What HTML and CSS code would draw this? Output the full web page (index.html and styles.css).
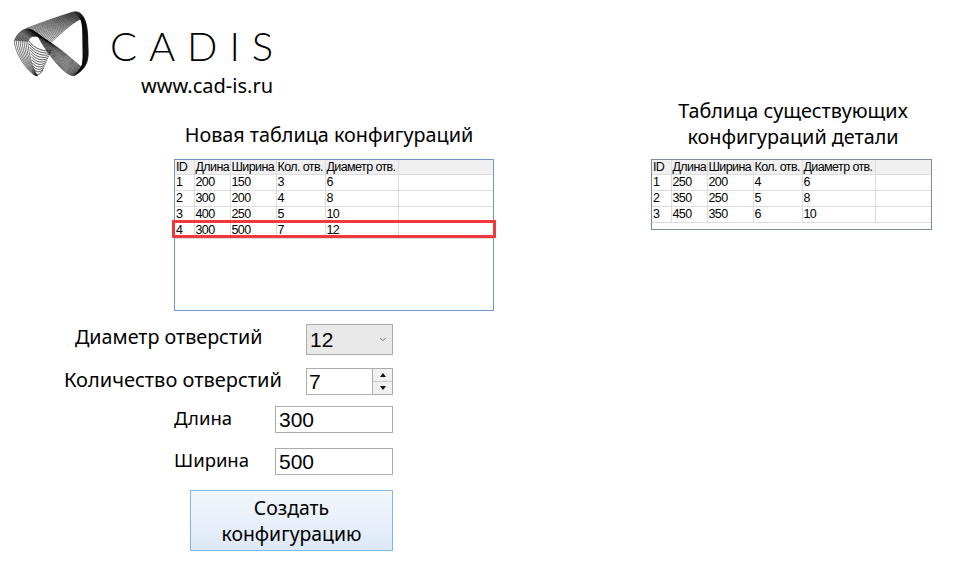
FILE: index.html
```html
<!DOCTYPE html>
<html lang="ru">
<head>
<meta charset="utf-8">
<title>CADIS</title>
<link rel="stylesheet" href="styles.css">
</head>
<body>
<main class="page">
  <section class="left">
    <header class="brand">
      <svg class="mark" id="mark" viewBox="0 0 270 240" aria-hidden="true"></svg>
      <div class="brand-text">
        <div class="wordmark">CADIS</div>
        <div class="site">www.cad-is.ru</div>
      </div>
    </header>
    <div class="panel">
      <h2 class="title title-new">Новая таблица конфигураций</h2>
      <div class="grid-wrap">
        <div class="grid-box grid-new">
          <table class="grid">
            <colgroup><col class="c-id"><col class="c-len"><col class="c-wid"><col class="c-cnt"><col class="c-dia"><col></colgroup>
            <thead><tr><th>ID</th><th>Длина</th><th>Ширина</th><th>Кол. отв.</th><th>Диаметр отв.</th><th></th></tr></thead>
            <tbody>
              <tr><td>1</td><td>200</td><td>150</td><td>3</td><td>6</td><td></td></tr>
              <tr><td>2</td><td>300</td><td>200</td><td>4</td><td>8</td><td></td></tr>
              <tr><td>3</td><td>400</td><td>250</td><td>5</td><td>10</td><td></td></tr>
              <tr><td>4</td><td>300</td><td>500</td><td>7</td><td>12</td><td></td></tr>
            </tbody>
          </table>
        </div>
        <div class="highlight"></div>
      </div>
    </div>
    <form class="form">
      <div class="row row-dia">
        <span class="label">Диаметр отверстий</span>
        <div class="select"><span>12</span>
          <svg class="chev" viewBox="0 0 8 5" aria-hidden="true"><path d="M1 1l3 2.6L7 1" fill="none" stroke="#777" stroke-width="1"/></svg>
        </div>
      </div>
      <div class="row row-cnt">
        <span class="label">Количество отверстий</span>
        <div class="spin">
          <span class="spin-val">7</span>
          <div class="spin-btns">
            <span class="spin-btn"><i class="arrow-up"></i></span>
            <span class="spin-btn"><i class="arrow-down"></i></span>
          </div>
        </div>
      </div>
      <div class="row row-len">
        <span class="label">Длина</span>
        <div class="input">300</div>
      </div>
      <div class="row row-wid">
        <span class="label">Ширина</span>
        <div class="input">500</div>
      </div>
      <div class="button">Создать<br>конфигурацию</div>
    </form>
  </section>
  <section class="right">
    <h2 class="title title-old">Таблица существующих<br>конфигураций детали</h2>
    <div class="grid-box grid-old">
      <table class="grid">
        <colgroup><col class="c-id"><col class="c-len"><col class="c-wid"><col class="c-cnt"><col class="c-dia"><col></colgroup>
        <thead><tr><th>ID</th><th>Длина</th><th>Ширина</th><th>Кол. отв.</th><th>Диаметр отв.</th><th></th></tr></thead>
        <tbody>
          <tr><td>1</td><td>250</td><td>200</td><td>4</td><td>6</td><td></td></tr>
          <tr><td>2</td><td>350</td><td>250</td><td>5</td><td>8</td><td></td></tr>
          <tr><td>3</td><td>450</td><td>350</td><td>6</td><td>10</td><td></td></tr>
        </tbody>
      </table>
    </div>
  </section>
</main>
<script src="logo.js"></script>
</body>
</html>
```

FILE: styles.css
```css
* { box-sizing: border-box; }
html, body { margin: 0; padding: 0; background: #fff; }
body { font-family: "Liberation Sans", Arial, sans-serif; color: #000; }
.page { display: grid; grid-template-columns: 651px 281px; width: 977px; height: 584px; overflow: hidden; }

.brand { display: flex; height: 122px; padding: 10px 0 0 5px; }
.mark { width: 90px; height: 80px; flex: none; }
.brand-text { margin-left: 14px; display: flex; flex-direction: column; align-items: flex-end; width: 164px; }
.wordmark { font-family: Lato, sans-serif; font-weight: 300; font-size: 40px; line-height: 48px; letter-spacing: 11.9px; margin-top: 12px; margin-right: -12px; white-space: nowrap; }
.site { font-family: "Noto Sans", sans-serif; font-size: 20px; line-height: 24px; margin-top: 4px; white-space: nowrap; }

.title { font-family: "Noto Sans", sans-serif; font-weight: 400; font-size: 19.8px; line-height: 26px; margin: 0; text-align: center; white-space: nowrap; }
.panel { margin-left: 174px; width: 320px; }
.title-new { margin-right: 10px; margin-bottom: 11px; }
.title-old { margin-top: 98px; margin-bottom: 9px; margin-left: 3px; }

.grid-wrap { position: relative; }
.grid-box { background: #fff; overflow: hidden; }
.grid-new { height: 152px; width: 320px; border: 1px solid #6f97c6; }
.grid-old { height: 71px; width: 281px; border: 1px solid #7d8c9c; }
.grid { border-collapse: collapse; table-layout: fixed; width: 100%; font-size: 12.5px; letter-spacing: -0.6px; line-height: 14px; }
.grid th, .grid td { padding: 0 0 0 1px; text-align: left; font-weight: 400; overflow: hidden; white-space: nowrap; border-right: 1px solid #dcdcdc; border-bottom: 1px solid #dcdcdc; vertical-align: top; }
.grid th { background: #f0f0f0; height: 14px; }
.grid td { height: 16px; }
.grid th:last-child, .grid td:last-child { border-right: 0; }
.c-id { width: 19px; }
.c-len { width: 36px; }
.c-wid { width: 46px; }
.c-cnt { width: 49px; }
.c-dia { width: 73px; }
.highlight { position: absolute; left: -2px; top: 61px; width: 324px; height: 18px; border: 3px solid #f0393f; }

.form { display: flex; flex-direction: column; width: 393px; font-family: "Noto Sans", sans-serif; }
.row { display: flex; align-items: center; justify-content: space-between; }
.row-dia { height: 31px; margin-top: 13px; padding-left: 75px; }
.row-cnt { height: 27px; margin-top: 13px; padding-left: 64px; }
.row-len { height: 27px; margin-top: 11px; padding-left: 174px; }
.row-wid { height: 27px; margin-top: 15px; padding-left: 174px; }
.label { font-size: 18.5px; line-height: 24px; white-space: nowrap; margin-bottom: 4px; }
.row-dia .label { font-size: 19.7px; margin-bottom: 6px; }
.row-cnt .label { font-size: 20px; }

.select, .spin, .input { font-family: "Liberation Sans", Arial, sans-serif; font-size: 21px; }
.select { width: 87px; height: 31px; background: #e9e9e9; border: 1px solid #acacac; display: flex; align-items: center; justify-content: space-between; padding: 0 5px 0 3px; }
.chev { width: 8px; height: 5px; }
.spin { width: 87px; height: 27px; border: 1px solid #acacac; display: flex; background: #fff; }
.spin-val { flex: 1; padding-left: 2px; line-height: 25px; }
.spin-btns { width: 20px; display: flex; flex-direction: column; border-left: 1px solid #acacac; }
.spin-btn { flex: 1; display: flex; align-items: center; justify-content: center; background: #f0f0f0; }
.spin-btn + .spin-btn { border-top: 1px solid #c8c8c8; }
.arrow-up, .arrow-down { width: 0; height: 0; border-left: 3px solid transparent; border-right: 3px solid transparent; }
.arrow-up { border-bottom: 4px solid #111; }
.arrow-down { border-top: 4px solid #111; }
.input { width: 118px; height: 27px; border: 1px solid #acacac; padding-left: 3px; line-height: 25px; }

.button { margin: 15px 0 0 190px; width: 203px; height: 61px; border: 1px solid #7fb6ec; background: linear-gradient(#f3f7fb, #dde9f7); font-size: 19.4px; line-height: 26px; text-align: center; padding-top: 4px; }
```

FILE: logo.js
```js
// Draws the CADIS ribbon mark: each strand is a blend of two edge curves.
(function () {
  var NS = "http://www.w3.org/2000/svg";
  var svg = document.getElementById("mark");
  var STRETCH = 1.07; // horizontal scale about the left edge of the mark
  function blend(a, b, s) {
    var d = "", i;
    for (i = 0; i < a.length; i += 2) {
      var x = a[i] + (b[i] - a[i]) * s, y = a[i + 1] + (b[i + 1] - a[i + 1]) * s;
      x = 28 + (x - 28) * STRETCH;
      d += (i === 0 ? "M" : i === 2 ? "C" : " ") + x.toFixed(1) + " " + y.toFixed(1) + " ";
    }
    return d;
  }
  function ribbon(a, b, n, w) {
    for (var k = 0; k <= n; k++) {
      var p = document.createElementNS(NS, "path");
      p.setAttribute("d", blend(a, b, k / n));
      p.setAttribute("fill", "none");
      p.setAttribute("stroke", "#000");
      p.setAttribute("stroke-width", w);
      svg.appendChild(p);
    }
  }
  ribbon(
    [60,56, 100,40, 150,20, 190,7, 222,-4, 234,40, 234,90, 234,130, 245,170, 195,197, 170,200, 115,125, 90,70, 72,50, 45,50, 28,92],
    [128,100, 150,78, 185,42, 212,28, 218,25, 220,55, 220,90, 220,130, 222,150, 218,172, 195,155, 165,120, 120,92, 98,78, 72,70, 66,95],
    19, 1.7
  );
  ribbon(
    [28,92, 28,125, 65,190, 90,197, 92,197, 92,197, 92,197],
    [66,95, 68,130, 78,172, 92,197, 92,197, 92,197, 92,197],
    7, 1.6
  );
  ribbon(
    [68,92, 85,118, 112,125, 132,122],
    [84,188, 92,197, 100,195, 108,180],
    10, 2
  );
})();
```
